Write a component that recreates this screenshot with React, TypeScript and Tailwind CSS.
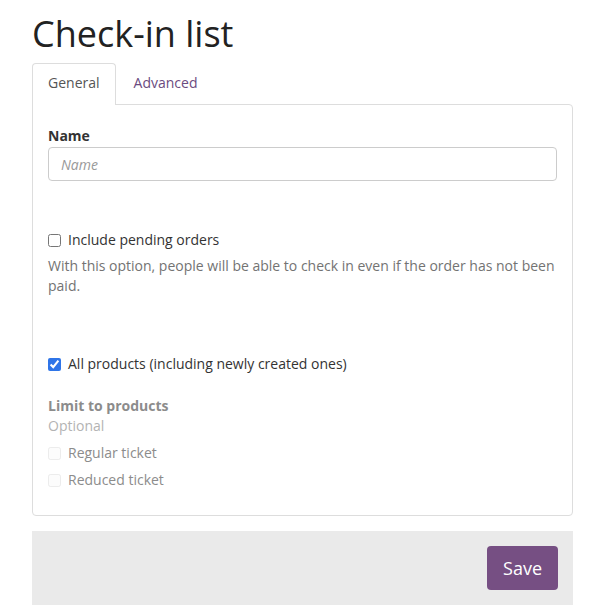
import { useState } from 'react';

export default function App() {
  const [pending, setPending] = useState(false);
  const [allProducts, setAllProducts] = useState(true);

  return (
    <div className="min-h-screen bg-white text-[14px] leading-[20px] text-[#333]" style={{ fontFamily: '"Open Sans", sans-serif' }}>
      <div className="ml-8 w-[541px]">
        {/* Title */}
        <h1 className="pt-[14px] text-[36px] leading-[40px] font-normal text-[#222]">Check-in list</h1>

        {/* Tabs */}
        <div className="mt-[9px] flex">
          <div className="relative z-10 -mb-px rounded-t-[4px] border border-b-0 border-[#ddd] bg-white px-[15px] pt-[9px] pb-[12px] text-[#555]">
            General
          </div>
          <a href="#" className="ml-[2px] px-[16px] py-[10px] text-[#6b4b80]">
            Advanced
          </a>
        </div>

        {/* Panel */}
        <div className="rounded-b-[4px] rounded-tr-[4px] border border-[#ddd] px-[15px] pt-[21px] pb-[25px]">
          <label className="block font-bold text-[#333]">Name</label>
          <input
            type="text"
            placeholder="Name"
            className="mt-[1px] block h-[34px] w-full rounded-[4px] border border-[#ccc] px-[12px] text-[14px] text-[#555] placeholder:italic placeholder:text-[#999] outline-none"
          />

          <label className="mt-[49px] flex items-center gap-[7px]">
            <input
              type="checkbox"
              checked={pending}
              onChange={(e) => setPending(e.target.checked)}
              className="m-0 h-[13px] w-[13px]"
            />
            <span>Include pending orders</span>
          </label>
          <p className="mt-[6px] text-[#737373]">
            With this option, people will be able to check in even if the order has not been paid.
          </p>

          <label className="mt-[58px] flex items-center gap-[7px]">
            <input
              type="checkbox"
              checked={allProducts}
              onChange={(e) => setAllProducts(e.target.checked)}
              className="m-0 h-[13px] w-[13px] accent-[#2f75e8]"
            />
            <span>All products (including newly created ones)</span>
          </label>

          <div className="mt-[22px] font-bold text-[#8c8c8c]">Limit to products</div>
          <div className="text-[#b3b3b3]">Optional</div>
          <label className="mt-[7px] flex items-center gap-[7px] text-[#8c8c8c]">
            <input type="checkbox" disabled className="m-0 h-[13px] w-[13px] opacity-40" />
            <span>Regular ticket</span>
          </label>
          <label className="mt-[7px] flex items-center gap-[7px] text-[#8c8c8c]">
            <input type="checkbox" disabled className="m-0 h-[13px] w-[13px] opacity-40" />
            <span>Reduced ticket</span>
          </label>
        </div>

        {/* Footer */}
        <div className="mt-[15px] flex h-[74px] justify-end bg-[#eaeaea] px-[15px] pt-[15px]">
          <button className="h-[44px] rounded-[4px] bg-[#764f83] px-[16px] text-[18px] text-white">
            Save
          </button>
        </div>
      </div>
    </div>
  );
}
